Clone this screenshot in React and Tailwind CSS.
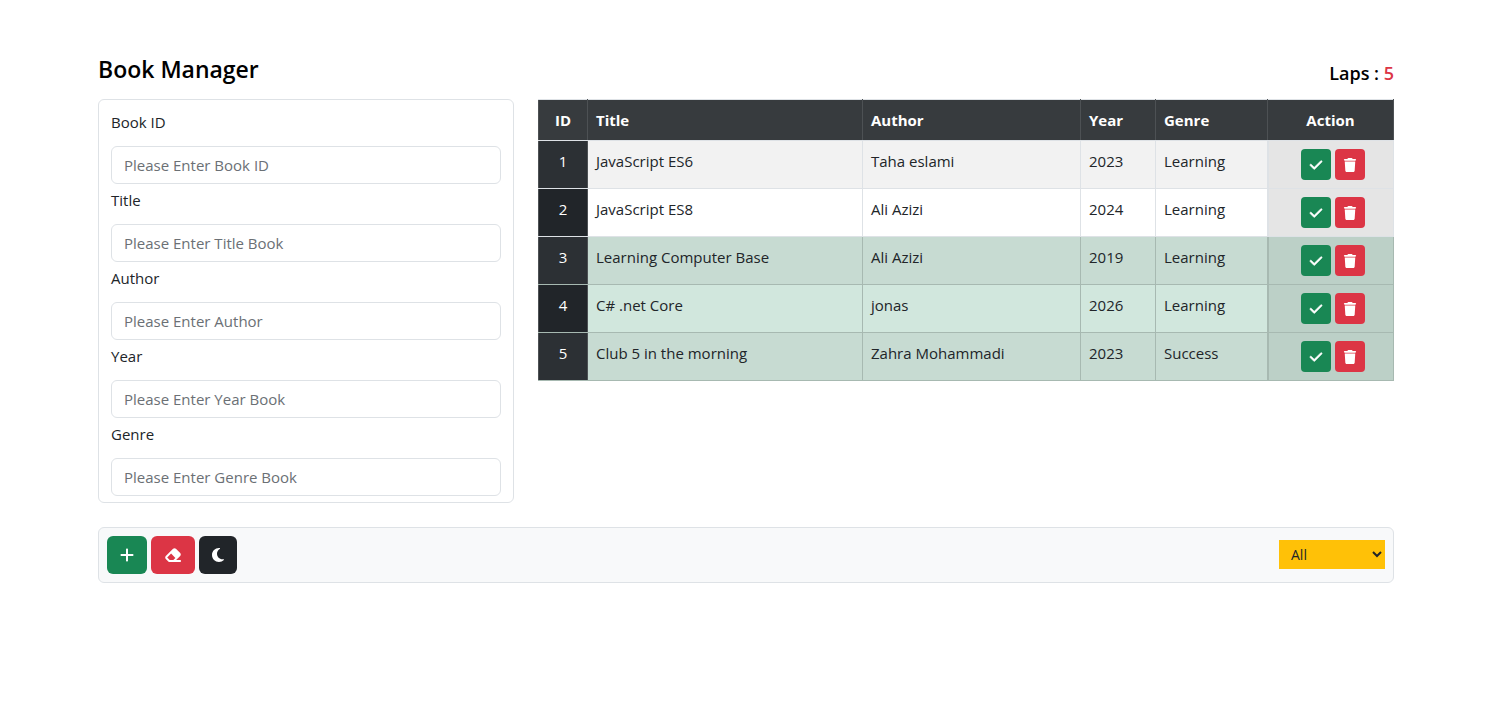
import { FaCheck, FaTrash, FaPlus, FaEraser, FaMoon } from "react-icons/fa6";

const fields = [
  { id: "book-id", label: "Book ID", placeholder: "Please Enter Book ID" },
  { id: "title", label: "Title", placeholder: "Please Enter Title Book" },
  { id: "author", label: "Author", placeholder: "Please Enter Author" },
  { id: "year", label: "Year", placeholder: "Please Enter Year Book" },
  { id: "genre", label: "Genre", placeholder: "Please Enter Genre Book" },
];

const books = [
  { id: 1, title: "JavaScript ES6", author: "Taha eslami", year: 2023, genre: "Learning", done: false },
  { id: 2, title: "JavaScript ES8", author: "Ali Azizi", year: 2024, genre: "Learning", done: false },
  { id: 3, title: "Learning Computer Base", author: "Ali Azizi", year: 2019, genre: "Learning", done: true },
  { id: 4, title: "C# .net Core", author: "jonas", year: 2026, genre: "Learning", done: true },
  { id: 5, title: "Club 5 in the morning", author: "Zahra Mohammadi", year: 2023, genre: "Success", done: true },
];

function BookForm() {
  return (
    <form className="flex flex-col gap-1 rounded-md border border-[#dee2e6] px-3 pt-2.5 pb-1.5">
      {fields.map((f) => (
        <div key={f.id}>
          <label htmlFor={f.id} className="block h-9 leading-6">
            {f.label}
          </label>
          <input
            id={f.id}
            type="text"
            placeholder={f.placeholder}
            className="block h-[38px] w-full rounded-md border border-[#dee2e6] bg-white px-3 placeholder:text-[#6b7075]"
          />
        </div>
      ))}
    </form>
  );
}

function BookRow({ book, odd }) {
  const cell = book.done
    ? odd
      ? "border border-[#a7b9b1] bg-[#c7dbd2] p-2 text-left align-top"
      : "border border-[#a7b9b1] bg-[#d1e7dd] p-2 text-left align-top"
    : odd
      ? "border border-[#dee2e6] bg-[#f2f2f2] p-2 text-left align-top"
      : "border border-[#dee2e6] bg-white p-2 text-left align-top";
  const action = book.done
    ? "border border-l-2 border-[#a7b9b1] bg-[#bcd0c7] p-2 pl-3"
    : "border border-l-2 border-[#dee2e6] bg-[#e5e5e5] p-2 pl-3";
  const idShade = odd ? "bg-[#2c3034]" : "bg-[#212529]";
  const idBorder = book.done ? "border-b-[#a7b9b1]" : "border-b-[#dee2e6]";
  return (
    <tr className="h-12">
      <th
        scope="row"
        className={`border border-[#4d5154] p-2 align-top font-medium text-white ${idShade} ${idBorder}`}
      >
        {book.id}
      </th>
      <td className={cell}>{book.title}</td>
      <td className={cell}>{book.author}</td>
      <td className={cell}>{book.year}</td>
      <td className={cell}>{book.genre}</td>
      <td className={action}>
        <div className="flex justify-center gap-1">
          <button
            type="button"
            aria-label="Mark as read"
            className="flex h-[31px] w-[30px] items-center justify-center rounded bg-[#198754] text-sm text-white"
          >
            <FaCheck className="stroke-white stroke-[20]" />
          </button>
          <button
            type="button"
            aria-label="Delete book"
            className="flex h-[31px] w-[30px] items-center justify-center rounded bg-[#dc3545] text-sm text-white"
          >
            <FaTrash />
          </button>
        </div>
      </td>
    </tr>
  );
}

function BookTable() {
  const head = "border border-[#4d5154] border-y-[#dee2e6] p-2 font-bold";
  return (
    <table className="w-full table-fixed border-collapse">
      <colgroup>
        <col className="w-[49px]" />
        <col />
        <col className="w-[218px]" />
        <col className="w-[75px]" />
        <col className="w-[112px]" />
        <col className="w-[126px]" />
      </colgroup>
      <thead className="bg-[#373b3e] text-left text-white">
        <tr className="h-[41px]">
          <th className={`${head} text-center`}>ID</th>
          <th className={head}>Title</th>
          <th className={head}>Author</th>
          <th className={head}>Year</th>
          <th className={head}>Genre</th>
          <th className={`${head} text-center`}>Action</th>
        </tr>
      </thead>
      <tbody>
        {books.map((b, i) => (
          <BookRow key={b.id} book={b} odd={i % 2 === 0} />
        ))}
      </tbody>
    </table>
  );
}

function Toolbar() {
  return (
    <div className="flex items-start gap-1 rounded-md border border-[#dee2e6] bg-[#f8f9fa] p-2">
      <button type="button" aria-label="Add book" className="flex h-[38px] w-10 items-center justify-center rounded-md bg-[#198754] text-base text-white">
        <FaPlus />
      </button>
      <button type="button" aria-label="Clear form" className="flex h-[38px] w-11 items-center justify-center rounded-md bg-[#dc3545] text-white">
        <FaEraser className="size-[18px]" />
      </button>
      <button type="button" aria-label="Dark mode" className="flex h-[38px] w-[38px] items-center justify-center rounded-md bg-[#212529] text-base text-white">
        <FaMoon />
      </button>
      <select aria-label="Filter books" className="mt-1 ml-auto h-[29px] w-[106px] bg-[#ffc107] px-2 text-sm">
        <option>All</option>
        <option>Learning</option>
        <option>Success</option>
      </select>
    </div>
  );
}

export default function App() {
  return (
    <main className="pr-[18px] font-['Open_Sans','Noto_Sans',sans-serif] text-[15px] leading-6 text-[#212529]">
      <div className="mx-auto max-w-[1320px] px-3 pt-[53px]">
        <header className="mb-2 flex items-end justify-between font-semibold text-black">
          <h1 className="mb-1.5 text-[23px] leading-8">Book Manager</h1>
          <p className="text-lg leading-9">
            Laps : <span className="text-[#dc3545]">5</span>
          </p>
        </header>
        <div className="grid grid-cols-3 items-start gap-6">
          <BookForm />
          <div className="col-span-2">
            <BookTable />
          </div>
          <div className="col-span-3">
            <Toolbar />
          </div>
        </div>
      </div>
    </main>
  );
}
